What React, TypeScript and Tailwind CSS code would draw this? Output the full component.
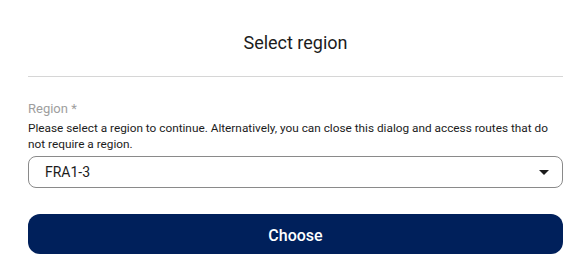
export default function App() {
  return (
    <div className="h-[280px] w-[588px] bg-white pl-[28px] pr-[25px] font-['Roboto',sans-serif] text-[#1c1c1c]">
      <div className="pt-[31px] pb-[21px] text-center text-[18px] leading-[24px]">
        Select region
      </div>
      <div className="h-px bg-[#d6d6d6]" />

      <div className="mt-[24px] text-[13px] leading-[16px] text-[#9e9e9e]">Region *</div>
      <p className="mt-[3px] text-[11.8px] leading-[16px] text-[#1c1c1c]">
        Please select a region to continue. Alternatively, you can close this dialog and access routes that do
        not require a region.
      </p>

      <div className="mt-[4px] flex h-[32px] items-center justify-between rounded-[8px] border border-[#8a8a8a] pl-[16px] pr-[12px]">
        <span className="text-[14px] text-[#1c1c1c]">FRA1-3</span>
        <svg width="10" height="5" viewBox="0 0 10 5" className="mr-[1px]">
          <path d="M0 0h10L5 5z" fill="#1c1c1c" />
        </svg>
      </div>

      <button className="mt-[26px] flex h-[40px] w-full items-center justify-center rounded-[12px] bg-[#00205b] pt-[3px] text-[16px] font-medium text-white">
        Choose
      </button>
    </div>
  );
}
